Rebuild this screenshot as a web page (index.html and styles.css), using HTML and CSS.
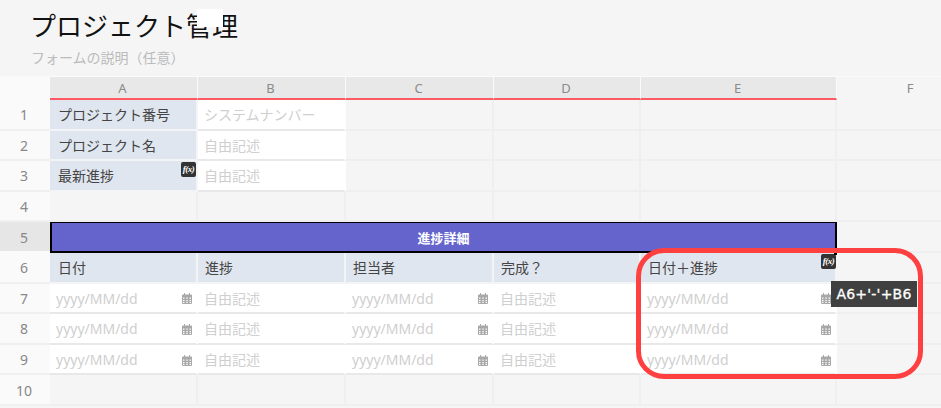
FILE: index.html
```html
<!DOCTYPE html>
<html lang="ja">
<head>
<meta charset="utf-8">
<title>プロジェクト管理</title>
<link rel="stylesheet" href="styles.css">
</head>
<body>
<svg class="defs" width="0" height="0" aria-hidden="true">
  <symbol id="cal" viewBox="0 0 10 11">
    <path fill="#a8a8a8" fill-rule="evenodd" d="M2 0h1v1.500h4V0h1v1.500h1a1 1 0 0 1 1 1V10a1 1 0 0 1-1 1H1a1 1 0 0 1-1-1V2.500a1 1 0 0 1 1-1h1zM1 4.500v1.300h1.500V4.500zM4.300 4.500v1.300h1.400V4.500zM7.500 4.500v1.300H9V4.500zM1 6.900v1.300h1.500V6.900zM4.300 6.900v1.300h1.400V6.900zM7.500 6.900v1.300H9V6.900zM1 9v1h1.500V9zM4.300 9v1h1.400V9zM7.500 9v1H9V9z"/>
  </symbol>
</svg>
<header class="form-head">
  <h1 class="form-title">プロジェクト管理</h1>
  <p class="form-desc">フォームの説明（任意）</p>
  <span class="title-patch"></span>
</header>
<main class="sheet">
  <div class="corner"></div>
  <div class="col">A</div><div class="col">B</div><div class="col">C</div><div class="col">D</div><div class="col">E</div><div class="col col-plain">F</div>

  <div class="num">1</div>
  <div class="cell label">プロジェクト番号</div><div class="cell input">システムナンバー</div><div class="cell"></div><div class="cell"></div><div class="cell"></div><div class="cell"></div>

  <div class="num">2</div>
  <div class="cell label">プロジェクト名</div><div class="cell input">自由記述</div><div class="cell"></div><div class="cell"></div><div class="cell"></div><div class="cell"></div>

  <div class="num">3</div>
  <div class="cell label">最新進捗<span class="fx">f(x)</span></div><div class="cell input">自由記述</div><div class="cell"></div><div class="cell"></div><div class="cell"></div><div class="cell"></div>

  <div class="num">4</div>
  <div class="cell"></div><div class="cell"></div><div class="cell"></div><div class="cell"></div><div class="cell"></div><div class="cell"></div>

  <div class="num num-active">5</div>
  <div class="banner">進捗詳細</div><div class="cell"></div>

  <div class="num">6</div>
  <div class="cell label">日付</div><div class="cell label">進捗</div><div class="cell label">担当者</div><div class="cell label">完成？</div><div class="cell label">日付＋進捗<span class="fx fx-e">f(x)</span><span class="handle"></span></div><div class="cell"></div>

  <div class="num">7</div>
  <div class="cell input date">yyyy/MM/dd<svg class="cal"><use href="#cal"/></svg></div><div class="cell input">自由記述</div><div class="cell input date">yyyy/MM/dd<svg class="cal"><use href="#cal"/></svg></div><div class="cell input">自由記述</div><div class="cell input date">yyyy/MM/dd<svg class="cal"><use href="#cal"/></svg></div><div class="cell"></div>

  <div class="num">8</div>
  <div class="cell input date">yyyy/MM/dd<svg class="cal"><use href="#cal"/></svg></div><div class="cell input">自由記述</div><div class="cell input date">yyyy/MM/dd<svg class="cal"><use href="#cal"/></svg></div><div class="cell input">自由記述</div><div class="cell input date">yyyy/MM/dd<svg class="cal"><use href="#cal"/></svg></div><div class="cell"></div>

  <div class="num">9</div>
  <div class="cell input date">yyyy/MM/dd<svg class="cal"><use href="#cal"/></svg></div><div class="cell input">自由記述</div><div class="cell input date">yyyy/MM/dd<svg class="cal"><use href="#cal"/></svg></div><div class="cell input">自由記述</div><div class="cell input date">yyyy/MM/dd<svg class="cal"><use href="#cal"/></svg></div><div class="cell"></div>

  <div class="num">10</div>
  <div class="cell"></div><div class="cell"></div><div class="cell"></div><div class="cell"></div><div class="cell"></div><div class="cell"></div>

  <div class="tooltip">A6+'-'+B6</div>
  <div class="callout"></div>
</main>
</body>
</html>
```
FILE: styles.css
```css
* { box-sizing: border-box; }
html, body { margin: 0; height: 100%; }
body {
  width: 941px;
  height: 408px;
  overflow: hidden;
  background: #f5f5f5;
  font-family: "Noto Sans", "Noto Sans CJK JP", sans-serif;
}
.defs { position: absolute; }

.form-head {
  position: relative;
  height: 77px;
  padding: 8px 0 0 31px;
  border-bottom: 1px solid #fafafa;
}
.form-title {
  margin: 0 0 0 -1px;
  font-size: 26px;
  font-weight: 400;
  line-height: 36px;
  color: #111;
}
.form-desc {
  margin: 5px 0 0;
  font-size: 14px;
  line-height: 18px;
  color: #bbb;
}
.title-patch {
  position: absolute;
  left: 197px;
  top: 9px;
  width: 26px;
  height: 18px;
  background: #fff;
}

.sheet {
  position: relative;
  display: grid;
  grid-template-columns: 50px 148px 148px 148px 147px 196px 148px;
  grid-template-rows: 23px repeat(10, 30.6px);
  font-size: 14px;
  line-height: 20px;
}
.corner { background: #fafafa; }
.col {
  display: flex;
  align-items: center;
  justify-content: center;
  height: 23px;
  padding-right: 2px;
  background: #e8e8e8;
  border-right: 1px solid #fafafa;
  border-bottom: 2px solid #ff5a64;
  font-size: 13px;
  color: #8a8a8a;
}
.col-plain {
  background: #f5f5f5;
  border: 0;
  padding-bottom: 2px;
}
.num {
  display: flex;
  align-items: center;
  justify-content: center;
  padding: 2px 2px 0 0;
  background: #fafafa;
  border-bottom: 2px solid #f0f0f0;
  font-size: 14px;
  color: #888;
}
.num-active { background: #e6e6e6; border-bottom-color: #fafafa; }
.cell {
  position: relative;
  display: flex;
  align-items: center;
  padding-top: 2px;
  border-right: 2px solid #efefef;
  border-bottom: 2px solid #efefef;
  background: #f5f5f5;
}
.label {
  padding-left: 7px;
  background: #e0e6ef;
  border-color: #f3f4f6;
  color: #444;
}
.num + .label { padding-left: 8px; }
.input {
  padding-left: 6px;
  background: #fff;
  border-right-color: #fff;
  border-bottom-color: #e8e8e8;
  color: #cfcfcf;
}
.date {
  justify-content: space-between;
  padding-right: 4px;
}
.cal { width: 10px; height: 11px; flex: none; }
.banner {
  grid-column: 2 / 7;
  display: flex;
  align-items: center;
  justify-content: center;
  margin: -1px 0 0;
  padding-top: 1px;
  background: #6464cc;
  border: 2px solid #000;
  font-size: 13px;
  font-weight: 700;
  color: #fff;
}
.fx {
  position: absolute;
  right: 0;
  top: 1px;
  width: 15px;
  height: 15px;
  border-radius: 2px;
  background: #333;
  color: #fff;
  font-family: "Liberation Serif", serif;
  font-size: 9px;
  font-weight: 700;
  font-style: italic;
  line-height: 15px;
  letter-spacing: -0.5px;
  text-align: center;
}
.fx-e { right: -1px; top: 1px; }
.handle {
  position: absolute;
  right: -4px;
  top: 0;
  width: 5px;
  height: 2px;
  background: #000;
}
.tooltip {
  position: absolute;
  left: 831px;
  top: 204px;
  width: 86px;
  height: 26px;
  background: #404040;
  color: #fff;
  font-family: "DejaVu Sans", sans-serif;
  font-size: 14px;
  letter-spacing: 0.2px;
  -webkit-text-stroke: 0.3px #fff;
  line-height: 26px;
  text-align: center;
}
.callout {
  position: absolute;
  left: 636px;
  top: 171px;
  width: 287px;
  height: 131px;
  border: 5px solid #ff4040;
  border-radius: 28px;
}
```
